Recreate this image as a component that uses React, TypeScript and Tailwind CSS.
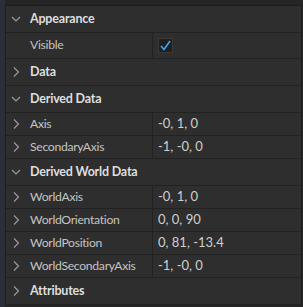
import { useState } from "react";

type Prop = { name: string; value?: string; check?: boolean; expandable?: boolean };
type Section = { title: string; open: boolean; props: Prop[] };

const sections: Section[] = [
  { title: "Appearance", open: true, props: [{ name: "Visible", check: true }] },
  { title: "Data", open: false, props: [] },
  {
    title: "Derived Data",
    open: true,
    props: [
      { name: "Axis", value: "-0, 1, 0", expandable: true },
      { name: "SecondaryAxis", value: "-1, -0, 0", expandable: true },
    ],
  },
  {
    title: "Derived World Data",
    open: true,
    props: [
      { name: "WorldAxis", value: "-0, 1, 0", expandable: true },
      { name: "WorldOrientation", value: "0, 0, 90", expandable: true },
      { name: "WorldPosition", value: "0, 81, -13.4", expandable: true },
      { name: "WorldSecondaryAxis", value: "-1, -0, 0", expandable: true },
    ],
  },
  { title: "Attributes", open: false, props: [] },
];

const Chevron = ({ down }: { down: boolean }) => (
  <svg width="10" height="10" viewBox="0 0 10 10" className="shrink-0">
    {down ? (
      <path d="M1 3 L5 7 L9 3" fill="none" stroke="#9a9a9a" strokeWidth="1.2" />
    ) : (
      <path d="M3 0.5 L7.5 5 L3 9.5" fill="none" stroke="#9a9a9a" strokeWidth="1.2" />
    )}
  </svg>
);

const Check = () => (
  <div className="w-[15px] h-[15px] bg-[#1f1f1f] border border-[#3a3a3a] flex items-center justify-center">
    <svg width="13" height="13" viewBox="0 0 13 13">
      <path d="M2 7 L5 10.5 L11 2" fill="none" stroke="#3ba6ff" strokeWidth="1.6" />
    </svg>
  </div>
);

export default function App() {
  const [visible] = useState(true);

  return (
    <div
      className="flex w-[303px] h-[307px] bg-[#252525] overflow-hidden"
      style={{ fontFamily: "Lato, 'Noto Sans', sans-serif" }}
    >
      <div className="w-[5px] bg-[#2b2e36] shrink-0" />
      <div className="flex-1 flex flex-col pt-[5px] pr-[1px]">
        <div className="border-t border-l border-r border-[#1e1e1e] bg-[#2e2e2e]">
          {sections.map((s) => (
            <div key={s.title}>
              <div className="h-[27px] flex items-center gap-[9px] pl-[5px] border-b border-[#222]">
                <Chevron down={s.open} />
                <span className="text-[12.5px] tracking-[-0.2px] font-bold text-[#dedede]">{s.title}</span>
              </div>
              {s.open &&
                s.props.map((p) => (
                  <div
                    key={p.name}
                    className={`flex border-b border-[#222] ${p.check ? "h-[26px]" : "h-[23px]"}`}
                  >
                    <div className="w-[147px] flex items-center gap-[9px] pl-[5px] border-r border-[#222]">
                      {p.expandable ? <Chevron down={false} /> : <span className="w-[10px]" />}
                      <span className="text-[12.2px] tracking-[-0.3px] text-[#c4c4c4]">{p.name}</span>
                    </div>
                    <div className="flex-1 flex items-center pl-[5px]">
                      {p.check ? (
                        visible && <Check />
                      ) : (
                        <span className="text-[13px] text-[#cfcfcf]">{p.value}</span>
                      )}
                    </div>
                  </div>
                ))}
            </div>
          ))}
        </div>
      </div>
    </div>
  );
}
